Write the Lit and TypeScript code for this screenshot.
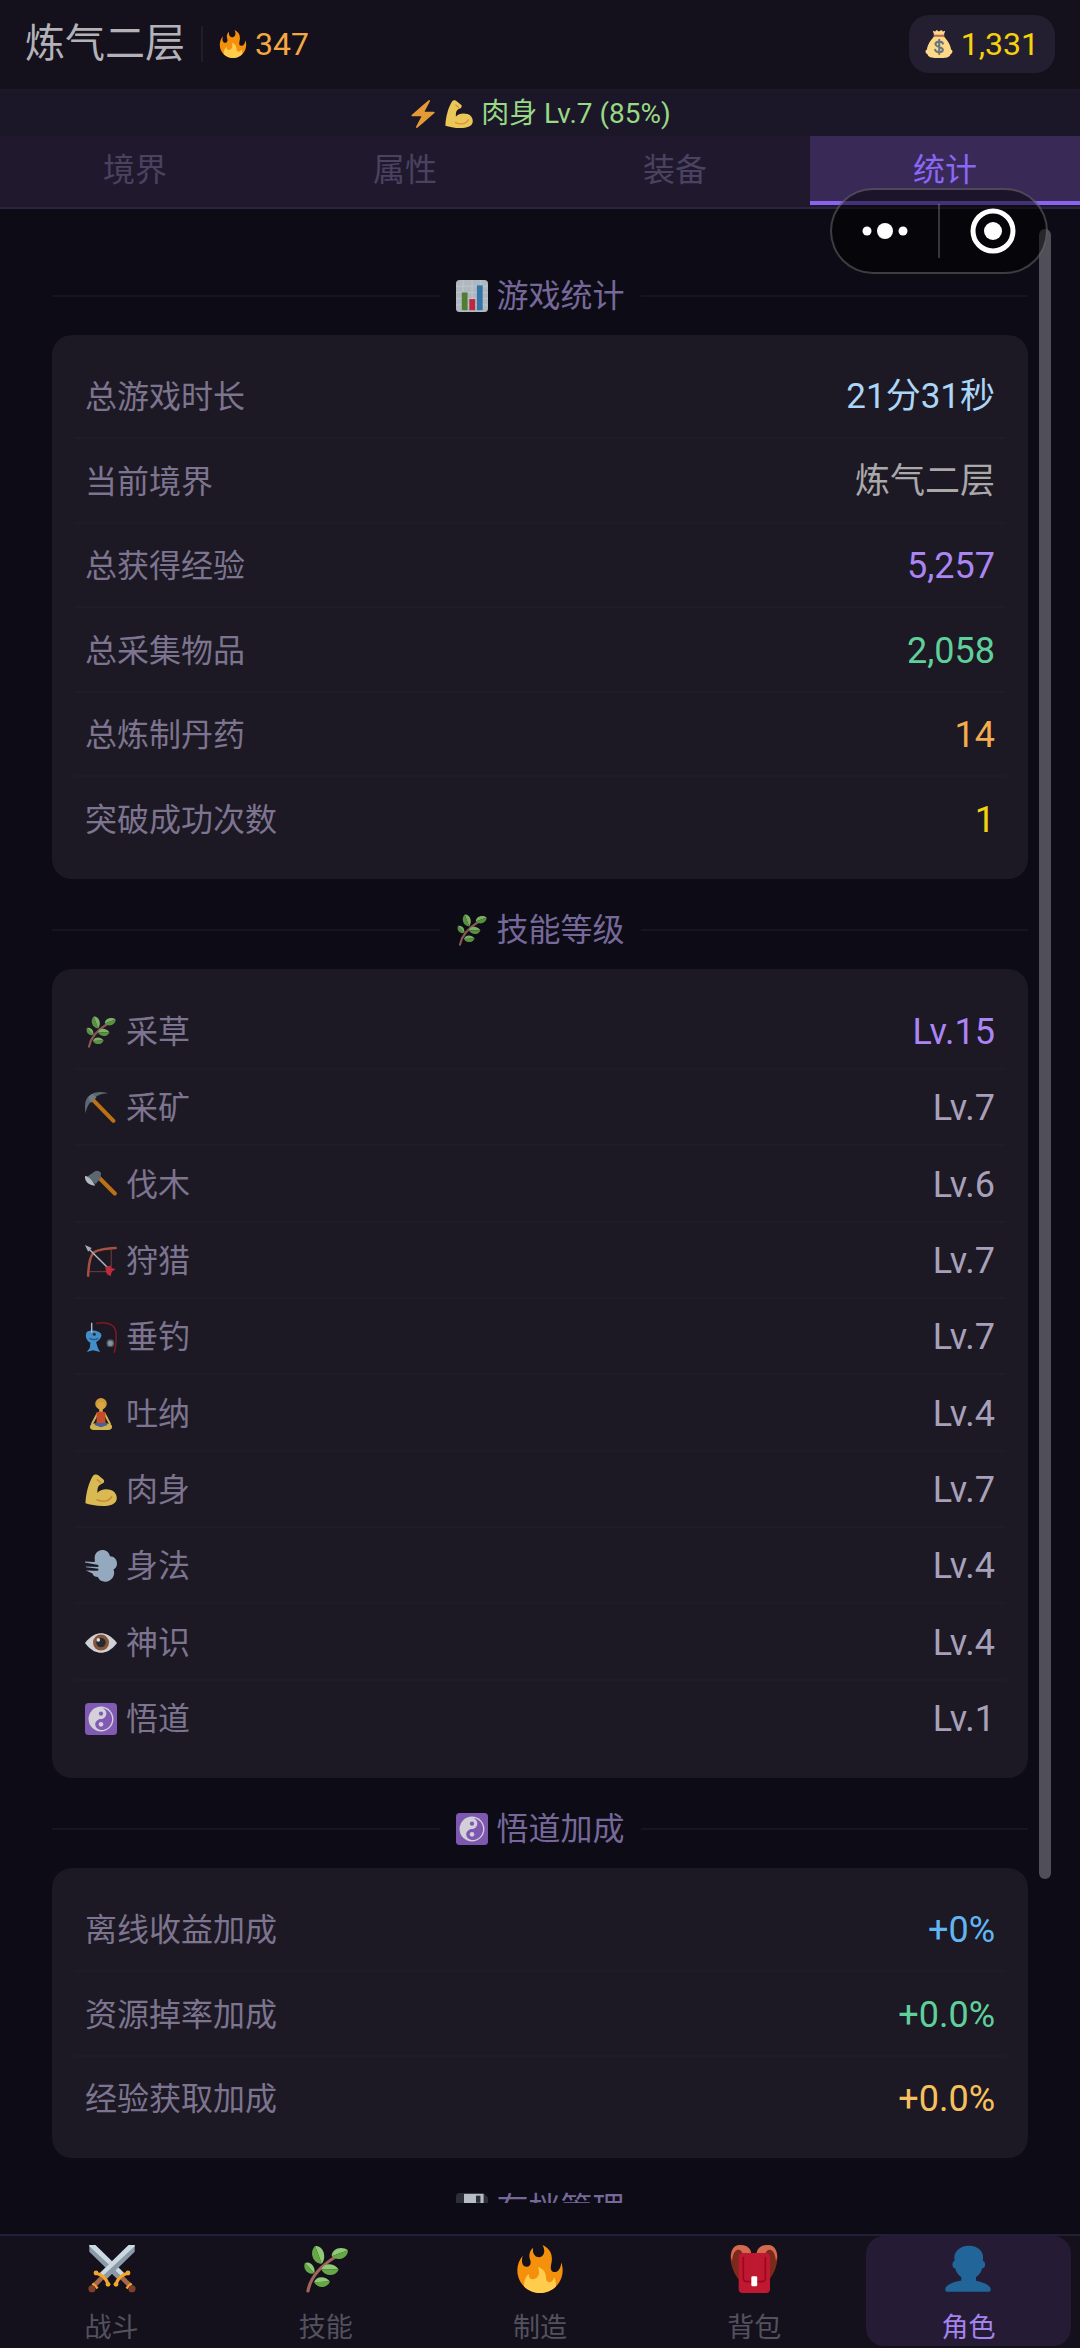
/**
 * Character screen, statistics tab.
 *
 * <game-icon> holds the small pictograms, <stat-section> renders one titled
 * card of label/value rows, <app-root> puts the screen together.
 */

import { LitElement, html, css, svg, nothing } from 'lit';
import type { TemplateResult } from 'lit';
import { customElement, property, state } from 'lit/decorators.js';
import { classMap } from 'lit/directives/class-map.js';

interface Stat {
  label: string;
  value: string;
  tone: string;
  icon?: string;
}

// one leaf, pointing right, centred on the origin
const leaf = (transform: string) => svg`
  <g transform=${transform}>
    <path fill="#8fcb76" d="M-6.500 0C-5-5.500 3-5.500 6.500-.6L-6.500 0z"/>
    <path fill="#66a848" d="M-6.500 0L6.500-.6C4.500 5-3.500 5.500-6.500 0z"/>
  </g>
`;

const blade = svg`
  <path fill="#8a9ba7" d="M1 0h4.500L27 21l-4.500 5L1 5z"/>
  <path fill="#ccd9e2" d="M5.500 0L27 21l-2 2.300L1 1V0z"/>
  <path stroke="#a5664f" stroke-width="3.600" d="M25.500 24.500l6.500 6.500"/>
  <path stroke="#f4a52c" stroke-width="2.400" stroke-linecap="round" d="M21 29.500c1-4 4-7 9-8.500"/>
  <circle fill="#f4a52c" cx="21" cy="29.500" r="1.800"/>
  <circle fill="#f4a52c" cx="30" cy="21" r="1.800"/>
  <path stroke="#f4a52c" stroke-width="1.800" d="M28.800 32.600l3.800-3.800"/>
  <circle fill="#7b412c" cx="33" cy="32.800" r="2.700"/>
`;

const ICONS: Record<string, TemplateResult> = {
  fire: svg`
    <path fill="#f4900c" d="M35 19c0-2.062-.367-4.039-1.040-5.868-.46 5.389-3.333 8.157-6.335 6.868-2.812-1.208-.917-5.917-.777-8.164.236-3.809-.012-8.169-6.931-11.794 2.875 5.500.333 8.917-2.333 9.125-2.958.231-5.667-2.542-4.667-7.042-3.238 2.386-3.332 6.402-2.333 9 1.042 2.708-.042 4.958-2.583 5.208-2.840.28-4.418-3.041-2.963-8.333C2.520 10.965 1 14.805 1 19c0 9.389 7.611 17 17 17s17-7.611 17-17z"/>
    <path fill="#ffcc4d" d="M28.394 23.999c.148 3.084-2.561 4.293-4.019 3.709-2.106-.843-1.541-2.291-2.083-5.291s-2.625-5.083-5.708-6c2.250 6.333-1.247 8.667-3.080 9.084-1.872.426-3.753-.001-3.968-4.007C7.352 23.668 6 26.676 6 30c0 .368.023.73.055 1.090C9.125 34.124 13.342 36 18 36s8.875-1.876 11.945-4.910c.032-.36.055-.722.055-1.090 0-2.187-.584-4.236-1.606-6.001z"/>
  `,
  money: svg`
    <path fill="#fdd888" d="M12 8c-5 5-9 12-9.500 17C-.5 26 .5 30 3 31c1 4 5 5 9 5h12c4 0 8-1 9-5 2.500-1 3.500-5 .5-6C33 20 29 13 24 8z"/>
    <path fill="#fdd888" d="M10 1l3 1 2-2 3 2 3-2 2 2 3-1-2 6H12z"/>
    <path fill="#bf6952" d="M11 6h14v2.500H11z"/>
    <path fill="none" stroke="#67757f" stroke-width="2.600" stroke-linecap="round" d="M23 17.500c-1-3.500-9-3.500-9.500.5-.5 4.500 9.500 3 9.500 7.500-.5 4-9 4-10 0M18.300 12.500v18.500"/>
  `,
  bolt: svg`
    <path fill="#f5a637" d="M32.938 15.651C32.792 15.260 32.418 15 32 15H19.925L26.890 1.458c.219-.426.106-.947-.271-1.243C26.437.071 26.218 0 26 0c-.233 0-.466.082-.653.243L18 6.588 3.347 19.243c-.316.273-.43.714-.284 1.105S3.582 21 4 21h12.075L9.110 34.542c-.219.426-.106.947.271 1.243.182.144.401.215.619.215.233 0 .466-.082.653-.243L18 29.412l14.653-12.655c.317-.273.43-.714.285-1.106z"/>
  `,
  muscle: svg`
    <path fill="#fbd75b" d="M.5 33C1 22 4 10 9 2c1.500-2 4.500-2 6-.5l6 5c1 1.500.5 3.500-1 4L17 12c-3.500 2-3 7-3 9.500 3-4.500 10-5 15-3.500 5 1.500 7.500 6.500 6.500 11-1.500 5.500-7.500 7-15.500 7S5 34.500.5 33z"/>
    <path fill="none" stroke="#ee9a4b" stroke-width="1.800" stroke-linecap="round" d="M13.500 29c6.500 3 14 2 16.500-3.500M14 6.500l3.500 3"/>
  `,
  chart: svg`
    <rect fill="#ccd6dd" width="36" height="36" rx="4"/>
    <path stroke="#e4eaee" stroke-width="1" d="M0 7h36M0 14h36M0 21h36M0 28h36M8 0v36M18 0v36M28 0v36"/>
    <path fill="#5c913b" d="M6.500 14h6.500v20H6.500z"/>
    <path fill="#dd2e44" d="M15 21.500h6.500V34H15z"/>
    <path fill="#3b88c3" d="M23.500 6H30v28h-6.500z"/>
  `,
  herb: svg`
    <path fill="none" stroke="#a0645a" stroke-width="2.400" stroke-linecap="round" d="M4.500 34.500C6 26 12 17 25 9"/>
    ${leaf('translate(12 7.500) rotate(72) scale(1.100)')}
    ${leaf('translate(28.500 6.500) rotate(-18)')}
    ${leaf('translate(5.500 17.500) rotate(50) scale(.8)')}
    ${leaf('translate(21 18.700) rotate(3)')}
    ${leaf('translate(15 28) scale(.92)')}
  `,
  pickaxe: svg`
    <path stroke="#d9820f" stroke-width="4.600" stroke-linecap="round" d="M9.500 9.500L32 32.500"/>
    <path fill="#66757f" d="M.5 24C-1 12 1 7 5 4 10 0 18-1 26 1.500 18 2 13 4 9.500 8 5 12 2.500 16 .5 24z"/>
    <path fill="#7f8d97" d="M4 6l4-4 5 4-6.500 6.500z"/>
  `,
  axe: svg`
    <path stroke="#d9820f" stroke-width="4.600" stroke-linecap="round" d="M15 9l18.500 18.500"/>
    <path fill="#66757f" d="M10 3.500c3-2.500 6-1.500 8 1l-.5 6L12 17 2 9z"/>
    <path fill="#ccd6dd" d="M0 7.500c4 1 8 4.500 11.500 11C6 18.500-1 15 0 7.500z"/>
  `,
  bow: svg`
    <path fill="none" stroke="#bf5b46" stroke-width="2.800" stroke-linecap="round" d="M3.500 34.500C4 24 5 14 9 9.500S24 4 34.500 3.500"/>
    <path fill="none" stroke="#8d4b3e" stroke-width="1" d="M29.500 4.500V30M4.500 30H30"/>
    <path stroke="#ccd6dd" stroke-width="1.600" d="M3 3l26 26"/>
    <path fill="#b9c6d0" d="M0 0l7.500 3.500-4 4z"/>
    <path fill="#dd2e44" d="M23 24.500l6-1.500v3l5.500 1L30 30l-1 5-3.500-1.500-2-3z"/>
  `,
  fishing: svg`
    <path fill="none" stroke="#8f1a1f" stroke-width="1.700" stroke-linecap="round" d="M13 2.500C27 0 35 5 35 15c0 8 0 13-2 20"/>
    <circle cx="28.500" cy="25" r="3.600" fill="#99aab5" stroke="#566672" stroke-width="1.500"/>
    <path fill="#4aa2e6" d="M2 12.500C6 9 19 11 18.500 16.500 18 20 15 22 12.500 24l2 6.500 2.500 4.500-8-2-7 2 3.500-5 .5-5.500C1.500 22-.5 17 2 12.500z"/>
    <path fill="none" stroke="#226699" stroke-width="1.400" d="M5 19.500c3 2 7 1.500 10 0"/>
    <circle cx="10.500" cy="15" r="1.700" fill="#292f33"/>
    <path stroke="#ccd6dd" stroke-width="1.600" d="M7.500 2v11"/>
  `,
  lotus: svg`
    <path fill="none" stroke="#f4cf5a" stroke-width="2.200" stroke-linejoin="round" stroke-linecap="round" d="M14 17.500L8 29M22 17.500L28 29"/>
    <path fill="#f4cf5a" d="M16 10h4v7h-4zM7 29.500c5-2 8 0 11 1.500 3-1.500 6-3.500 11-1.500 3 3 1 6.500-3 6.500H10c-4 0-6-3.500-3-6.500z"/>
    <path fill="#4a6fb0" d="M13.500 27h9l3 3.500L18 33l-7.500-2.500z"/>
    <path fill="#e2572b" d="M13 16c3.500-1 6.500-1 10 0v12H13z"/>
    <circle cx="18" cy="6.500" r="6.500" fill="#f4b13b"/>
    <circle cx="18" cy="8.500" r="4.400" fill="#f7c04a"/>
  `,
  wind: svg`
    <path fill="#a9c3da" d="M11 10C10 4 15 0 19.500 0c4.500 0 8 3 8.500 7 5 0 8 4 8 8 0 3.500-1.500 6-4 7 2.500 5-1 12-7 13.500-5 1-9-1-10.500-5C11 30.500 9 29 8.500 26.500L1 23c4 0 9 .5 14 0v-2L1 19.500v-1l14 .5v-2L0 14v-1l11 .5z"/>
  `,
  eye: svg`
    <path fill="#f0f2f4" d="M0 18C7 9 13 7 18 7s11 2 18 11c-7 9-13 11-18 11S7 27 0 18z"/>
    <circle cx="18" cy="17.500" r="9" fill="#9a5f3f"/>
    <circle cx="18" cy="17.500" r="5.300" fill="#292f33"/>
    <circle cx="15" cy="14.500" r="2" fill="#fff"/>
  `,
  yinyang: svg`
    <rect fill="#9266cc" width="36" height="36" rx="4"/>
    <circle cx="18" cy="18" r="14" fill="#f5f2fa"/>
    <path fill="#9266cc" d="M18 5.500c7 0 12.500 5.500 12.500 12.500S25 30.500 18 30.500c-4-.5-6.500-3.500-6.500-6.500s3-6 6.500-6 6-3 6-6.200-2.500-6.300-6-6.300z"/>
    <circle cx="18" cy="12" r="2.400" fill="#9266cc"/>
    <circle cx="18" cy="24" r="2.600" fill="#f5f2fa"/>
  `,
  disk: svg`
    <path fill="#31373d" d="M4 0h27l5 5v27a4 4 0 0 1-4 4H4a4 4 0 0 1-4-4V4a4 4 0 0 1 4-4z"/>
    <path fill="#d5dde3" d="M9 1h22v12H9z"/>
    <path fill="#31373d" d="M22.500 3h5v8h-5z"/>
    <path fill="#e1e8ed" d="M5 19h26v17H5z"/>
  `,
  swords: svg`
    <g>${blade}</g>
    <g transform="translate(36) scale(-1 1)">${blade}</g>
  `,
  backpack: svg`
    <path fill="#7b2a1c" d="M8 0c5 0 8 3 8 8H8C7 14 8 22 9 28 2 23-1 10 1 5c1-3 3-5 7-5zM28 0c-5 0-8 3-8 8h8c1 6 0 14-1 20C34 23 37 10 35 5c-1-3-3-5-7-5z"/>
    <path fill="#d3694f" d="M1 6C2 2 4 0 8 0c5 0 8 3 8 7l-6 1C9 4 7 3 5 4S2 8 1.500 12C.5 10 .5 8 1 6zM35 6c-1-4-3-6-7-6-5 0-8 3-8 7l6 1c1-4 3-5 5-4s3 4 3.500 8c1-2 1-4 .5-6z"/>
    <rect fill="#be1931" x="6.500" y="6" width="23.500" height="30" rx="3"/>
    <path fill="none" stroke="#a0041e" stroke-width="1.200" stroke-linecap="round" d="M10 9.500V25c0 1.500 1 2.500 2.500 2.500H24c1.500 0 2.500-1 2.500-2.500V9.500"/>
    <rect fill="#fff" x="16" y="23.500" width="4.400" height="7.500" rx="1"/>
  `,
  person: svg`
    <path fill="#226699" d="M24 26.799v-2.566c2-1.348 4.080-3.779 4.703-6.896.186.103.206.17.413.17.991 0 1.709-1.287 1.709-2.873 0-1.562-.823-2.827-1.794-2.865.187-.674.293-1.577.293-2.735C29.324 5.168 26 .527 18.541.527c-6.629 0-10.777 4.641-10.777 8.507 0 1.123.069 2.043.188 2.755-.911.137-1.629 1.352-1.629 2.845 0 1.587.804 2.873 1.796 2.873.206 0 .025-.067.209-.17C8.952 20.453 11 22.885 13 24.232v2.414c-5 .645-12 3.437-12 6.230v1.061C1 35 2.076 35 3.137 35h29.725C33.924 35 35 35 35 33.938v-1.061c0-2.615-6-5.225-11-6.078z"/>
  `,
};

const GAME_STATS: Stat[] = [
  { label: '总游戏时长', value: '21分31秒', tone: 'sky' },
  { label: '当前境界', value: '炼气二层', tone: 'grey' },
  { label: '总获得经验', value: '5,257', tone: 'violet' },
  { label: '总采集物品', value: '2,058', tone: 'green' },
  { label: '总炼制丹药', value: '14', tone: 'orange' },
  { label: '突破成功次数', value: '1', tone: 'gold' },
];

const SKILLS: Stat[] = [
  { icon: 'herb', label: '采草', value: 'Lv.15', tone: 'violet' },
  { icon: 'pickaxe', label: '采矿', value: 'Lv.7', tone: 'plain' },
  { icon: 'axe', label: '伐木', value: 'Lv.6', tone: 'plain' },
  { icon: 'bow', label: '狩猎', value: 'Lv.7', tone: 'plain' },
  { icon: 'fishing', label: '垂钓', value: 'Lv.7', tone: 'plain' },
  { icon: 'lotus', label: '吐纳', value: 'Lv.4', tone: 'plain' },
  { icon: 'muscle', label: '肉身', value: 'Lv.7', tone: 'plain' },
  { icon: 'wind', label: '身法', value: 'Lv.4', tone: 'plain' },
  { icon: 'eye', label: '神识', value: 'Lv.4', tone: 'plain' },
  { icon: 'yinyang', label: '悟道', value: 'Lv.1', tone: 'plain' },
];

const BONUSES: Stat[] = [
  { label: '离线收益加成', value: '+0%', tone: 'blue' },
  { label: '资源掉率加成', value: '+0.0%', tone: 'green' },
  { label: '经验获取加成', value: '+0.0%', tone: 'amber' },
];

const TABS = ['境界', '属性', '装备', '统计'];

const NAV = [
  { icon: 'swords', label: '战斗' },
  { icon: 'herb', label: '技能' },
  { icon: 'fire', label: '制造' },
  { icon: 'backpack', label: '背包' },
  { icon: 'person', label: '角色' },
];

@customElement('game-icon')
export class GameIcon extends LitElement {
  @property({ type: String }) name = '';

  static styles = css`
    :host {
      display: block;
      flex: none;
      width: 32px;
      height: 32px;
    }
    svg { display: block; width: 100%; height: 100%; overflow: visible; }
  `;

  render() {
    return html`<svg viewBox="0 0 36 36" fill="none" aria-hidden="true">${ICONS[this.name]}</svg>`;
  }
}

@customElement('stat-section')
export class StatSection extends LitElement {
  @property({ type: String }) heading = '';
  @property({ type: String }) icon = '';
  @property({ attribute: false }) stats: Stat[] = [];

  static styles = css`
    :host { display: block; }
    h2 {
      display: flex;
      align-items: center;
      gap: 16px;
      margin: 0;
      padding: 30px 0 18px;
      font: inherit;
      line-height: 42px;
      color: #76699a;
    }
    h2::before, h2::after {
      content: "";
      flex: 1;
      height: 2px;
      background: #181523;
    }
    .title { display: flex; align-items: center; gap: 9px; }
    game-icon { opacity: 0.85; }

    .card {
      display: grid;
      grid-auto-rows: 84px 85px;
      margin: 0;
      padding: 20px 23px 17px;
      border-radius: 20px;
      background: #1c1924;
    }
    .card.compact {
      grid-auto-rows: 76px 76px 77px;
      padding: 25px 23px 21px;
    }
    .stat {
      display: flex;
      align-items: center;
      justify-content: space-between;
      box-sizing: border-box;
      padding: 2px 10px 0;
      border-bottom: 2px solid #1f1c29;
    }
    .stat:last-child { border-color: transparent; }
    dt { display: flex; align-items: center; gap: 9px; color: #7d748f; }
    dd { margin: 0; font-size: 36px; }

    .sky, .grey { font-size: 35px; }
    .sky { color: #acd6f7; }
    .grey { color: #a9a8ab; }
    .violet { color: #ab85f4; }
    .green { color: #5fd09b; }
    .orange { color: #f5ac4e; }
    .gold { color: #f2d211; }
    .plain { color: #a8a0b9; }
    .blue { color: #62b5f3; }
    .amber { color: #f6c05e; }
  `;

  render() {
    return html`
      <h2><span class="title"><game-icon name=${this.icon}></game-icon>${this.heading}</span></h2>
      ${this.stats.length ? this._card() : nothing}
    `;
  }

  private _card() {
    const compact = this.stats.some((s) => s.icon);
    return html`
      <dl class=${classMap({ card: true, compact })}>
        ${this.stats.map((s) => html`
          <div class="stat">
            <dt>${s.icon ? html`<game-icon name=${s.icon}></game-icon>` : nothing}${s.label}</dt>
            <dd class=${s.tone}>${s.value}</dd>
          </div>
        `)}
      </dl>
    `;
  }
}

@customElement('app-root')
export class AppRoot extends LitElement {
  @state() private _tab = '统计';
  @state() private _page = '角色';

  static styles = css`
    :host {
      position: relative;
      display: flex;
      flex-direction: column;
      height: 100vh;
      overflow: hidden;
      background: #0d0b15;
      font: 32px/42px Roboto, "Noto Sans CJK SC", sans-serif;
    }
    button {
      margin: 0;
      border: 0;
      padding: 0;
      background: none;
      color: inherit;
      font: inherit;
      cursor: pointer;
    }

    header {
      display: flex;
      align-items: center;
      gap: 16px;
      padding: 15px 25px 16px;
      border-bottom: 1px solid #1e1a2a;
      background: #14111c;
    }
    h1 { margin: 0; font-size: 40px; font-weight: 400; color: #b3b2b8; }
    .bar { width: 2px; height: 36px; background: #201c2b; }
    .amount { display: flex; align-items: center; gap: 8px; }
    .amount game-icon { width: 28px; height: 30px; }
    .exp { color: #f5a742; }
    .gold {
      margin-left: auto;
      padding: 8px 16px;
      border-radius: 20px;
      background: #241e31;
      color: #f5d20a;
    }

    .status {
      display: flex;
      align-items: center;
      justify-content: center;
      gap: 8px;
      padding-top: 1px;
      background: #1c1728;
      color: #97d984;
      font-size: 28px;
      line-height: 45px;
    }
    .status game-icon { width: 28px; height: 28px; opacity: 0.92; }

    .tabs {
      display: flex;
      padding-bottom: 2px;
      border-bottom: 2px solid #2a2440;
      background: #20192d;
    }
    .tab {
      flex: 1;
      line-height: 69px;
      color: #494260;
    }
    .tab.active {
      background: #392957;
      box-shadow: inset 0 -4px #8a63f0;
      color: #8a67f5;
    }

    main {
      position: relative;
      flex: 1;
      min-height: 0;
      margin-bottom: 31px;
      padding: 36px 52px 0;
      overflow: hidden;
    }
    .scrollbar {
      position: absolute;
      top: 20px;
      right: 29px;
      bottom: 324px;
      width: 12px;
      border-radius: 6px;
      background: #504e56;
    }

    nav {
      display: flex;
      gap: 9px;
      padding: 0 9px 2px;
      border-top: 2px solid #241f38;
      background: #14111c;
      font-size: 27px;
      line-height: 36px;
      color: #54515f;
    }
    .nav-item {
      display: flex;
      flex: 1;
      flex-direction: column;
      align-items: center;
      gap: 17px;
      padding: 9px 0 0;
      border-radius: 18px;
    }
    .nav-item game-icon { width: 48px; height: 48px; }
    .nav-item.active { background: #251b35; color: #a583ee; }

    .capsule {
      position: absolute;
      top: 188px;
      right: 32px;
      display: flex;
      align-items: center;
      box-sizing: border-box;
      width: 218px;
      height: 86px;
      border: 2px solid rgba(255, 255, 255, 0.22);
      border-radius: 43px;
      background: rgba(0, 0, 0, 0.5);
    }
    .capsule button { flex: 1; height: 100%; }
    .capsule .bar { height: 54px; background: rgba(255, 255, 255, 0.2); }
    .capsule svg { display: block; width: 48px; height: 48px; margin: 0 auto; fill: #fff; }
  `;

  render() {
    return html`
      <header>
        <h1>炼气二层</h1>
        <span class="bar"></span>
        <span class="amount exp"><game-icon name="fire"></game-icon>347</span>
        <span class="amount gold"><game-icon name="money"></game-icon>1,331</span>
      </header>

      <div class="status">
        <game-icon name="bolt"></game-icon>
        <game-icon name="muscle"></game-icon>
        <span>肉身 Lv.7 (85%)</span>
      </div>

      <div class="tabs" role="tablist">
        ${TABS.map((t) => html`
          <button
            class=${classMap({ tab: true, active: t === this._tab })}
            role="tab"
            aria-selected=${t === this._tab ? 'true' : 'false'}
            @click=${() => { this._tab = t; }}
          >${t}</button>
        `)}
      </div>

      <main>
        <stat-section heading="游戏统计" icon="chart" .stats=${GAME_STATS}></stat-section>
        <stat-section heading="技能等级" icon="herb" .stats=${SKILLS}></stat-section>
        <stat-section heading="悟道加成" icon="yinyang" .stats=${BONUSES}></stat-section>
        <stat-section heading="存档管理" icon="disk"></stat-section>
        <div class="scrollbar"></div>
      </main>

      <nav>
        ${NAV.map((n) => html`
          <button
            class=${classMap({ 'nav-item': true, active: n.label === this._page })}
            @click=${() => { this._page = n.label; }}
          ><game-icon name=${n.icon}></game-icon>${n.label}</button>
        `)}
      </nav>

      <div class="capsule">
        <button aria-label="更多">
          <svg viewBox="0 0 48 48">
            <circle cx="6" cy="24" r="4.500"/>
            <circle cx="24" cy="24" r="8"/>
            <circle cx="42" cy="24" r="4.500"/>
          </svg>
        </button>
        <span class="bar"></span>
        <button aria-label="关闭">
          <svg viewBox="0 0 48 48">
            <circle cx="24" cy="24" r="20" fill="none" stroke="#fff" stroke-width="5"/>
            <circle cx="24" cy="24" r="9"/>
          </svg>
        </button>
      </div>
    `;
  }
}

declare global {
  interface HTMLElementTagNameMap {
    'app-root': AppRoot;
    'stat-section': StatSection;
    'game-icon': GameIcon;
  }
}
